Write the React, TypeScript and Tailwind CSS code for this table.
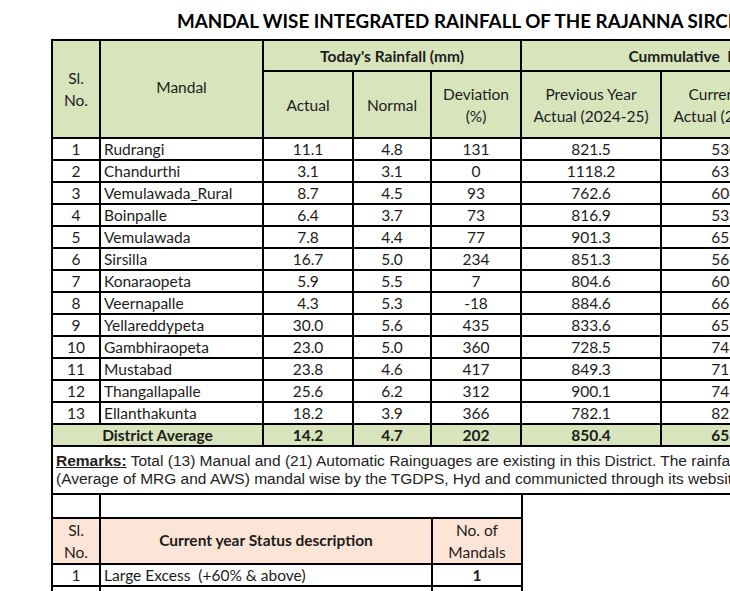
const rows = [
  ["1", "Rudrangi", "11.1", "4.8", "131", "821.5", "530.6"],
  ["2", "Chandurthi", "3.1", "3.1", "0", "1118.2", "639.0"],
  ["3", "Vemulawada_Rural", "8.7", "4.5", "93", "762.6", "604.2"],
  ["4", "Boinpalle", "6.4", "3.7", "73", "816.9", "535.4"],
  ["5", "Vemulawada", "7.8", "4.4", "77", "901.3", "655.7"],
  ["6", "Sirsilla", "16.7", "5.0", "234", "851.3", "567.3"],
  ["7", "Konaraopeta", "5.9", "5.5", "7", "804.6", "604.8"],
  ["8", "Veernapalle", "4.3", "5.3", "-18", "884.6", "667.1"],
  ["9", "Yellareddypeta", "30.0", "5.6", "435", "833.6", "659.5"],
  ["10", "Gambhiraopeta", "23.0", "5.0", "360", "728.5", "748.2"],
  ["11", "Mustabad", "23.8", "4.6", "417", "849.3", "715.6"],
  ["12", "Thangallapalle", "25.6", "6.2", "312", "900.1", "749.9"],
  ["13", "Ellanthakunta", "18.2", "3.9", "366", "782.1", "822.3"],
];

const td = "border-2 border-black text-center align-middle p-0 leading-[20px]";
const hd = "border-2 border-black bg-[#d8e4bc] text-center align-middle p-0 leading-[22px]";

export default function App() {
  return (
    <div className="w-[730px] h-[591px] overflow-hidden bg-white text-[#1c1c1c] font-['Lato','Open_Sans',sans-serif]">
      <div className="pl-[177px] pt-[10px] h-[39px] whitespace-nowrap text-[18.8px] font-bold leading-[22px] text-black">
        MANDAL WISE INTEGRATED RAINFALL OF THE RAJANNA SIRCILLA DISTRICT
      </div>

      <table className="ml-[51px] border-collapse table-fixed w-[872px] text-[15.5px]">
        <colgroup>
          <col className="w-[48px]" />
          <col className="w-[163px]" />
          <col className="w-[90px]" />
          <col className="w-[78px]" />
          <col className="w-[90px]" />
          <col className="w-[140px]" />
          <col className="w-[140px]" />
          <col className="w-[123px]" />
        </colgroup>
        <thead>
          <tr className="h-[31px]">
            <th rowSpan={2} className={hd + " font-normal"}>
              Sl.
              <br />
              No.
            </th>
            <th rowSpan={2} className={hd + " font-normal pb-[5px]"}>
              Mandal
            </th>
            <th colSpan={3} className={hd + " font-bold"}>
              Today's Rainfall (mm)
            </th>
            <th colSpan={3} className={hd + " font-bold"}>
              Cummulative&nbsp; Rainfall (mm)
            </th>
          </tr>
          <tr className="h-[67px]">
            <th className={hd + " font-normal"}>Actual</th>
            <th className={hd + " font-normal"}>Normal</th>
            <th className={hd + " font-normal"}>
              Deviation
              <br />
              (%)
            </th>
            <th className={hd + " font-normal"}>
              Previous Year
              <br />
              Actual (2024-25)
            </th>
            <th className={hd + " font-normal"}>
              Current Year
              <br />
              Actual (2025-26)
            </th>
            <th className={hd + " font-normal"}>
              Deviation
              <br />
              (%)
            </th>
          </tr>
        </thead>
        <tbody>
          {rows.map((r) => (
            <tr key={r[0]} className="h-[22px]">
              <td className={td}>{r[0]}</td>
              <td className={td + " text-left pl-[3px]"}>{r[1]}</td>
              <td className={td}>{r[2]}</td>
              <td className={td}>{r[3]}</td>
              <td className={td}>{r[4]}</td>
              <td className={td}>{r[5]}</td>
              <td className={td}>{r[6]}</td>
              <td className={td}>-19</td>
            </tr>
          ))}
          <tr className="h-[22px] font-bold">
            <td colSpan={2} className={td + " bg-[#d8e4bc]"}>
              District Average
            </td>
            <td className={td + " bg-[#d8e4bc]"}>14.2</td>
            <td className={td + " bg-[#d8e4bc]"}>4.7</td>
            <td className={td + " bg-[#d8e4bc]"}>202</td>
            <td className={td + " bg-[#d8e4bc]"}>850.4</td>
            <td className={td + " bg-[#d8e4bc]"}>653.4</td>
            <td className={td + " bg-[#d8e4bc]"}>-23</td>
          </tr>
          <tr className="h-[48px]">
            <td
              colSpan={8}
              className="border-2 border-black p-0 pl-[3px] text-left align-middle whitespace-nowrap font-['Liberation_Sans',Arial,sans-serif] text-[15.5px] leading-[18px] text-[#222]"
            >
              <span className="font-bold underline">Remarks:</span> Total (13) Manual and (21) Automatic Rainguages are
              existing in this District. The rainfall data is compiled
              <br />
              (Average of MRG and AWS) mandal wise by the TGDPS, Hyd and communicted through its website.
            </td>
          </tr>
        </tbody>
      </table>

      <table className="ml-[51px] border-collapse table-fixed w-[470px] text-[15.5px]">
        <colgroup>
          <col className="w-[48px]" />
          <col className="w-[332px]" />
          <col className="w-[90px]" />
        </colgroup>
        <tbody>
          <tr className="h-[23px]">
            <td className="border-2 border-t-0 border-black p-0" />
            <td colSpan={2} className="border-2 border-t-0 border-black p-0" />
          </tr>
          <tr className="h-[45px]">
            <td className="border-2 border-black bg-[#fce4d6] text-center align-middle p-0 leading-[22px]">
              Sl.
              <br />
              No.
            </td>
            <td className="border-2 border-black bg-[#fce4d6] text-center align-middle p-0 font-bold">
              Current year Status description
            </td>
            <td className="border-2 border-black bg-[#fce4d6] text-center align-middle p-0 leading-[22px]">
              No. of
              <br />
              Mandals
            </td>
          </tr>
          <tr className="h-[22px]">
            <td className={td}>1</td>
            <td className={td + " text-left pl-[3px]"}>Large Excess&nbsp; (+60% &amp; above)</td>
            <td className={td + " font-bold"}>1</td>
          </tr>
          <tr className="h-[22px]">
            <td className={td}>2</td>
            <td className={td + " text-left pl-[3px]"}>Excess&nbsp; (+20% to +59%)</td>
            <td className={td + " font-bold"}>1</td>
          </tr>
        </tbody>
      </table>
    </div>
  );
}
